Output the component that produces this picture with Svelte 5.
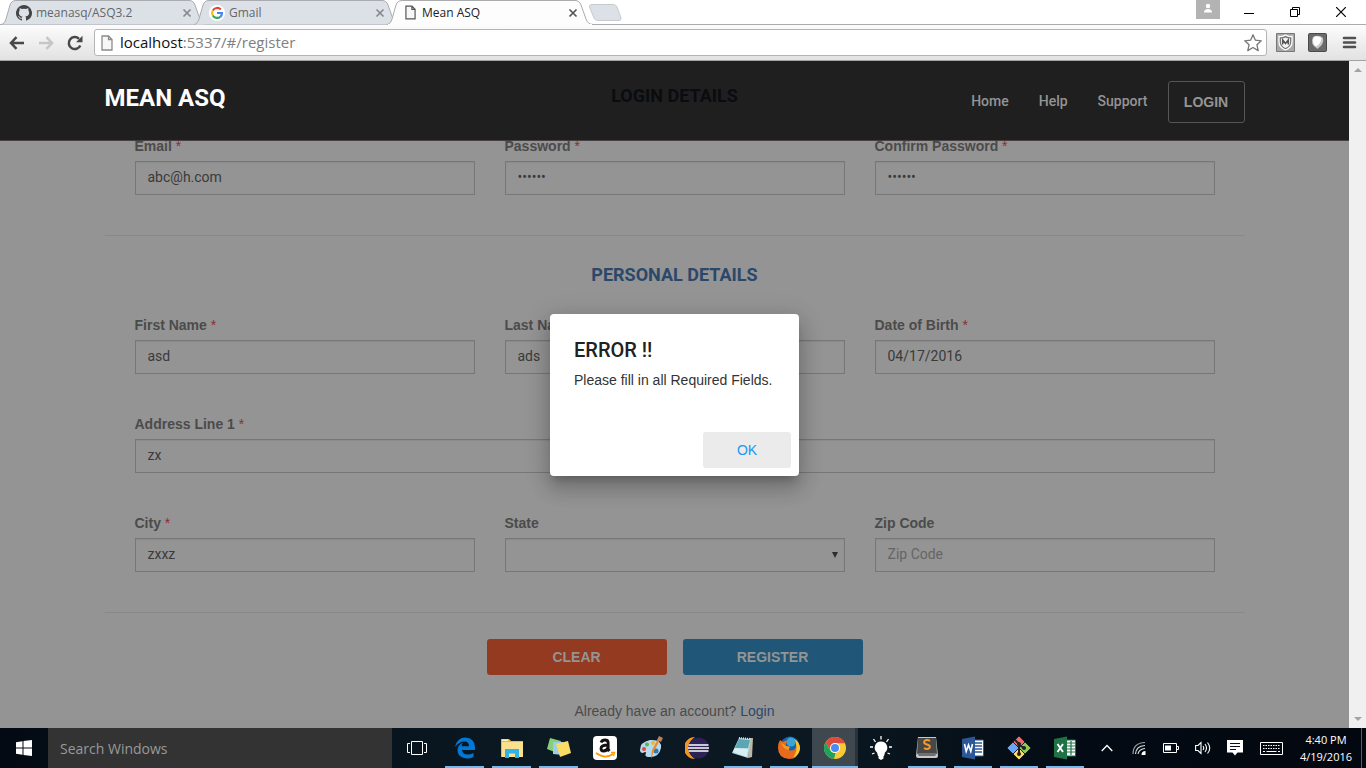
<script>
  let email = $state('abc@h.com');
  let password = $state('secret');
  let confirm = $state('secret');
  let first = $state('asd');
  let last = $state('ads');
  let birth = $state('04/17/2016');
  let address = $state('zx');
  let city = $state('zxxz');
  let zip = $state('');
  let search = $state('');
  let url = 'localhost';
</script>

{#snippet tabShape(active)}
  <svg class="shape" viewBox="0 0 204 25" width="204" height="25" aria-hidden="true">
    <path d="M-4 24.500C-1 24 0 22 1 19L5 5Q6.500 .5 11 .5H184Q188.500 .5 190 5L195 19Q197 24.500 202 24.500" fill={active ? '#fdfdfd' : '#dce1e8'} stroke="#a9abae" />
    {#if active}<path d="M-3 24.500H201" stroke="#fcfcfc" />{/if}
  </svg>
{/snippet}

{#snippet closeIcon(color)}
  <svg viewBox="0 0 10 10" width="10" height="10" aria-hidden="true"><path d="M1.500 1.500L8.500 8.500M8.500 1.500L1.500 8.500" stroke={color} stroke-width="1.700" /></svg>
{/snippet}

{#snippet pageIcon(w, h, c)}
  <svg viewBox="0 0 12 16" width={w} height={h} aria-hidden="true"><path d="M1 1H7.500L11 4.500V15H1Z M7.500 1V4.500H11" fill="#f7f7f7" stroke={c} stroke-width="1.300" /></svg>
{/snippet}

<div class="window">
  <div class="tabs">
    <div class="tab">
      {@render tabShape(false)}
      <svg viewBox="0 0 16 16" width="16" height="16" aria-hidden="true"><path fill="#444" d="M8 0a8 8 0 0 0-2.500 15.600c.4.100.5-.2.500-.4v-1.500c-2.200.5-2.700-.9-2.700-.9-.4-.9-.9-1.200-.9-1.200-.7-.5.1-.5.1-.5.800.1 1.200.8 1.200.8.7 1.200 1.900.9 2.300.7.100-.5.300-.9.500-1.100-1.800-.2-3.600-.9-3.600-4 0-.9.300-1.600.8-2.100-.1-.2-.4-1 .1-2.100 0 0 .7-.2 2.200.8a7.500 7.500 0 0 1 4 0c1.500-1 2.200-.8 2.200-.8.4 1.100.2 1.900.1 2.100.5.5.8 1.200.8 2.100 0 3.100-1.900 3.700-3.700 3.900.3.300.6.8.6 1.500v2.300c0 .2.100.5.500.4A8 8 0 0 0 8 0Z" /></svg>
      <span class="tab-title">meanasq/ASQ3.2</span>
      <button aria-label="Close meanasq/ASQ3.2">{@render closeIcon('#888')}</button>
    </div>
    <div class="tab">
      {@render tabShape(false)}
      <svg viewBox="0 0 16 16" width="16" height="16" aria-hidden="true"><circle cx="8" cy="8" r="8" fill="#fff" /><g fill="none" stroke-width="2.200"><path d="M11.800 4.500A5 5 0 0 0 3.800 5.500" stroke="#ea4335" /><path d="M3.800 5.500A5 5 0 0 0 3.800 10.500" stroke="#fbbc05" /><path d="M3.800 10.500A5 5 0 0 0 11.300 11.800" stroke="#34a853" /><path d="M11.300 11.800A5 5 0 0 0 13 8H8" stroke="#4285f4" /></g></svg>
      <span class="tab-title">Gmail</span>
      <button aria-label="Close Gmail">{@render closeIcon('#888')}</button>
    </div>
    <div class="tab active">
      {@render tabShape(true)}
      <span class="tab-page">{@render pageIcon(11, 15, '#555')}</span>
      <span class="tab-title">Mean ASQ</span>
      <button aria-label="Close Mean ASQ">{@render closeIcon('#555')}</button>
    </div>
    <button class="new-tab" aria-label="New tab"><svg viewBox="0 0 34 17" width="34" height="17" aria-hidden="true"><path d="M4 .5H25Q28 .5 29 3L33 14Q33.500 16.500 31 16.500H10Q7 16.500 6 14L1.500 3Q1 .5 4 .5Z" fill="#dce1e8" stroke="#c8cacd" /></svg></button>
    <div class="controls">
      <button class="profile" aria-label="Profile"><svg viewBox="0 0 24 19" width="24" height="19" aria-hidden="true"><path d="M0 0H24V19H0Z" fill="#b3b3b3" /><circle cx="12" cy="6" r="2.200" fill="#fff" /><path d="M8 12.500Q8 9 12 9T16 12.500Z" fill="#fff" /></svg></button>
      <button aria-label="Minimize"><svg viewBox="0 0 10 11" width="10" height="11" aria-hidden="true"><path d="M0 6.500H10" stroke="#000" /></svg></button>
      <button aria-label="Restore"><svg viewBox="0 0 10 10" width="10" height="10" aria-hidden="true"><path d="M.5 2.500H7.500V9.500H.5ZM2.500 2.500V.5H9.500V7.500H7.500" fill="none" stroke="#000" /></svg></button>
      <button aria-label="Close window"><svg viewBox="0 0 10 10" width="10" height="10" aria-hidden="true"><path d="M0 0L10 10M10 0L0 10" stroke="#000" stroke-width="1.200" /></svg></button>
    </div>
  </div>

  <div class="toolbar">
    <button aria-label="Back"><svg viewBox="0 0 16 14" width="16" height="14" aria-hidden="true"><path d="M7.500 1.200L2 7L7.500 12.800M2 7H15" fill="none" stroke="#484848" stroke-width="2.500" /></svg></button>
    <button aria-label="Forward"><svg viewBox="0 0 16 14" width="16" height="14" aria-hidden="true"><path d="M8.500 1.200L14 7L8.500 12.800M14 7H1" fill="none" stroke="#c6c6c6" stroke-width="2.500" /></svg></button>
    <button aria-label="Reload"><svg viewBox="0 0 16 16" width="16" height="16" aria-hidden="true"><path d="M13.300 10.500A6 6 0 1 1 12 3.800" fill="none" stroke="#484848" stroke-width="2.500" /><path d="M15.500 .8V7.300H9Z" fill="#484848" /></svg></button>
    <div class="address">
      {@render pageIcon(12, 16, '#8b8b8b')}
      <span class="url"><span>{url}</span>:5337/#/register</span>
      <button aria-label="Bookmark this page"><svg viewBox="0 0 20 20" width="20" height="20" aria-hidden="true"><path d="M10 1.800L12.400 7.200L18.300 7.800L13.900 11.700L15.200 17.600L10 14.500L4.800 17.600L6.100 11.700L1.700 7.800L7.600 7.200Z" fill="#fff" stroke="#777" stroke-width="1.300" stroke-linejoin="round" /></svg></button>
    </div>
    <div class="extensions">
      <button aria-label="McAfee WebAdvisor"><svg viewBox="0 0 19 19" width="19" height="19" aria-hidden="true"><path d="M.5 .5H18.500V18.500H.5Z" fill="#a8a8a8" stroke="#777" /><path d="M3 3.500Q7 4 9.500 2Q12 4 16 3.500V9Q16 14.500 9.500 17Q3 14.500 3 9Z" fill="#777" stroke="#fff" stroke-width="1.300" /><path d="M5 5.500Q8 5.500 9.500 4.500Q11 5.500 14 5.500V9Q14 13 9.500 15Q5 13 5 9Z" fill="#f5f5f5" /><path d="M6.700 11.500V7L9.500 10.500L12.300 7V11.500" fill="none" stroke="#555" stroke-width="1.500" /></svg></button>
      <button aria-label="Extension"><svg viewBox="0 0 19 19" width="19" height="19" aria-hidden="true"><rect width="19" height="19" rx="2" fill="#4a4a4a" /><rect x="1" y="1" width="17" height="17" rx="1" fill="#6b6b6b" /><path d="M5 4Q11 1 15 5Q16.500 11 9.500 16Q1.500 11 5 4Z" fill="#c9c9c9" /><path d="M6 4Q3 10 8 13.500Q13 11 13.500 5Q9 2 6 4Z" fill="#fff" /></svg></button>
      <button aria-label="Menu"><svg viewBox="0 0 19 13" width="19" height="13" aria-hidden="true"><path d="M4 2H15M4 6.500H15M4 11H15" stroke="#505050" stroke-width="2.600" stroke-linecap="round" /></svg></button>
    </div>
  </div>

  <div class="viewport">
    <div class="page">
      <header>
        <nav>
          <a class="brand" href="#/">MEAN ASQ</a>
          <a href="#/home">Home</a>
          <a href="#/help">Help</a>
          <a href="#/support">Support</a>
          <button class="login">LOGIN</button>
        </nav>
      </header>

      <form onsubmit={(e) => e.preventDefault()}>
        <h2 class="under">LOGIN DETAILS</h2>
        <div class="row">
          <div class="field"><label for="email">Email <i>*</i></label><input id="email" bind:value={email} /></div>
          <div class="field"><label for="pw">Password <i>*</i></label><input id="pw" type="password" bind:value={password} /></div>
          <div class="field"><label for="pw2">Confirm Password <i>*</i></label><input id="pw2" type="password" bind:value={confirm} /></div>
        </div>
        <hr />
        <h2>PERSONAL DETAILS</h2>
        <div class="row">
          <div class="field"><label for="first">First Name <i>*</i></label><input id="first" bind:value={first} /></div>
          <div class="field"><label for="last">Last Name <i>*</i></label><input id="last" bind:value={last} /></div>
          <div class="field"><label for="dob">Date of Birth <i>*</i></label><input id="dob" bind:value={birth} /></div>
        </div>
        <div class="row">
          <div class="field"><label for="addr">Address Line 1 <i>*</i></label><input id="addr" bind:value={address} /></div>
        </div>
        <div class="row">
          <div class="field"><label for="city">City <i>*</i></label><input id="city" bind:value={city} /></div>
          <div class="field"><label for="state">State</label>
            <div class="select"><select id="state"><option></option></select><svg viewBox="0 0 6 6" width="6" height="6" aria-hidden="true"><path d="M0 0H6L3 6Z" fill="#2e2e2e" /></svg></div>
          </div>
          <div class="field"><label for="zip">Zip Code</label><input id="zip" placeholder="Zip Code" bind:value={zip} /></div>
        </div>
        <hr />
        <div class="actions">
          <button type="button" class="clear">CLEAR</button>
          <button type="submit">REGISTER</button>
        </div>
        <p class="account">Already have an account? <a href="#/login">Login</a></p>
      </form>

      <div class="backdrop">
        <div class="dialog" role="alertdialog" aria-labelledby="dlg-title" aria-describedby="dlg-text">
          <div class="message">
            <h1 id="dlg-title">ERROR !!</h1>
            <p id="dlg-text">Please fill in all Required Fields.</p>
          </div>
          <button>OK</button>
        </div>
      </div>
    </div>
    <div class="scrollbar" aria-hidden="true">
      <svg viewBox="0 0 8 4" width="8" height="4"><path d="M0 4L4 0L8 4Z" fill="#a3a3a3" /></svg>
      <svg viewBox="0 0 8 4" width="8" height="4"><path d="M0 0L4 4L8 0Z" fill="#a3a3a3" /></svg>
    </div>
  </div>

  <div class="taskbar">
    <button class="start" aria-label="Start"><svg viewBox="0 0 16 16" width="16" height="16" aria-hidden="true"><path d="M0 2.200L6.500 1.300V7.500H0ZM7.500 1.100L16 0V7.500H7.500ZM0 8.500H6.500V14.700L0 13.800ZM7.500 8.500H16V16L7.500 14.900Z" fill="#fff" /></svg></button>
    <input class="search" aria-label="Search Windows" placeholder="Search Windows" bind:value={search} />
    <button class="view" aria-label="Task View"><svg viewBox="0 0 20 14" width="20" height="14" aria-hidden="true"><path d="M4.500 .5H15.500V13.500H4.500ZM3 2.500H.5V11.500H3M17 2.500H19.500V11.500H17" fill="none" stroke="#fff" /></svg></button>

    <button class="app wide open" aria-label="Edge"><svg viewBox="0 0 24 24" width="24" height="24" aria-hidden="true"><path d="M2 11Q4 1.500 12.500 1.500Q21.500 2 22 11V14H9Q9.500 18.500 14.500 18.500Q18 18.500 20.500 17V21Q17.500 22.500 14 22.500Q5 22 4.500 14.500Q4.500 9 10 6.500Q8.500 8 8.500 10.200H16Q16 5.500 11.500 5.500Q6 5.500 2 11Z" fill="#0078d7" /></svg></button>
    <button class="app wide open" aria-label="File Explorer"><svg viewBox="0 0 24 24" width="24" height="24" aria-hidden="true"><path d="M1 3H9L11 5H23V21H1Z" fill="#e9b948" /><path d="M2 6H23V21H2Z" fill="#fbe08d" /><path d="M2 3.500H8V5H2Z" fill="#fff3c5" /><path d="M5 13H19V22H15V17.500H9V22H5Z" fill="#2fb4e9" /></svg></button>
    <button class="app wide open" aria-label="Sticky Notes"><svg viewBox="0 0 24 24" width="24" height="24" aria-hidden="true"><path d="M3 2L14 5L10 17L0 13Z" fill="#86cf76" /><path d="M6 6L16 6V19L6 18Z" fill="#9ccdf1" /><path d="M9 8L21 5L24 17L13 21Z" fill="#f9dc63" /></svg></button>
    <button class="app" aria-label="Amazon"><svg viewBox="0 0 24 24" width="24" height="24" aria-hidden="true"><rect width="24" height="24" rx="4" fill="#fff" /><path d="M8 6.500Q9 4 12 4Q15.200 4 15.200 7V13.500L16.500 15M15 9Q8 9 8 12.500Q8 15 10.500 15Q14 15 15 11.500" fill="none" stroke="#111" stroke-width="2.800" /><path d="M3 17Q12 23.500 20 18" fill="none" stroke="#f90" stroke-width="1.700" /><path d="M18 16.500H21.500L20.500 20" fill="none" stroke="#f90" stroke-width="1.300" /></svg></button>
    <button class="app" aria-label="Paint"><svg viewBox="0 0 24 24" width="24" height="24" aria-hidden="true"><path d="M1 14Q1 6 11 4Q23 3 22 12Q20 22 9 21Q5 20 7 17Q7 15 4 17Q1 17 1 14Z" fill="#b5d9ef" /><circle cx="5" cy="13" r="2" fill="#dd4c38" /><circle cx="8" cy="8.500" r="2" fill="#66ae45" /><circle cx="14" cy="7" r="2" fill="#f0b832" /><circle cx="17" cy="15" r="2.500" fill="#2c78b8" /><path d="M21 4L15 15L12 23L13 14L19 3Z" fill="#e88b2b" /><path d="M18 4L20 0L24 2L22 6Z" fill="#bb8055" /></svg></button>
    <button class="app" aria-label="Eclipse"><svg viewBox="0 0 24 24" width="24" height="24" aria-hidden="true"><path d="M10 1A11 11 0 0 0 10 23Q3 18 4 12Q4 5 10 1Z" fill="#f7941e" /><circle cx="13.500" cy="12" r="10.500" fill="#2c2255" /><path d="M3.500 9H23.500M3 12H24M3.500 15H23.500" stroke="#fff" stroke-width="1.500" /></svg></button>
    <button class="app open" aria-label="Notepad"><svg viewBox="0 0 24 24" width="24" height="24" aria-hidden="true"><path d="M19 2H22L21 21L17 22Z" fill="#c2b79c" /><path d="M8 2L20 3L17 22L1 17Z" fill="#a8d6de" /><path d="M8 3L19 4L17 12L4 12Z" fill="#5ca6b3" /><path d="M4 12L17 13L16 21L2 16Z" fill="#d8eef1" /><path d="M8 2L20 3" stroke="#ddd" stroke-width="2" stroke-dasharray="1 1" /></svg></button>
    <button class="app open" aria-label="Firefox"><svg viewBox="0 0 24 24" width="24" height="24" aria-hidden="true"><circle cx="13" cy="10" r="9.500" fill="#1765a9" /><circle cx="14" cy="6" r="4.500" fill="#37a5d8" /><path d="M3 4L6 6Q9 4 11 5Q8 8 9 10L13 11Q11 13 12 14Q17 16 19 11Q20 6 17 3Q23 6 23 13Q21 23 12 23Q1 22 1 12Q1 7 3 4Z" fill="#e86a1c" /><path d="M17 3Q23 6 23 13Q22 19 16 22Q21 14 19 8Q19 5 17 3Z" fill="#fdc52b" /><path d="M4 7Q8 9 9 10L13 11Q11 13 12 14Q7 14 4 7Z" fill="#f69b22" /></svg></button>
    <button class="app open current" aria-label="Chrome"><svg viewBox="0 0 24 24" width="24" height="24" aria-hidden="true"><circle cx="12" cy="12" r="11" fill="#fbc932" /><path d="M2.500 6.500A11 11 0 0 1 22 7.200H12A5 5 0 0 0 7.500 14Z" fill="#dd4b3e" /><path d="M2.500 6.500L7.500 14.500Q9 17.500 12.500 17L11 23A11 11 0 0 1 2.500 6.500Z" fill="#1ca261" /><circle cx="12" cy="12" r="5" fill="#fff" /><circle cx="12" cy="12" r="4" fill="#4a8af4" /></svg></button>
    <button class="app" aria-label="Tips"><svg viewBox="0 0 24 24" width="24" height="24" aria-hidden="true"><path d="M12 5.500A6.200 6.200 0 0 1 16 16.500L15 20H9L8 16.500A6.200 6.200 0 0 1 12 5.500ZM9.500 20H14.500V22.500L12 24L9.500 22.500Z" fill="#fff" /><path d="M12 0V3.500M4.500 3L6.500 6M19.500 3L17.500 6M1 11H4M20 11H23M3 18L5.500 17M21 18L18.500 17" stroke="#fff" stroke-width="1.300" /></svg></button>
    <button class="app open" aria-label="Sublime Text"><svg viewBox="0 0 24 24" width="24" height="24" aria-hidden="true"><path d="M3 1H21L23 20Q23 22 21 22H3Q1 22 1 20Z" fill="#c8c8c8" /><path d="M3 2H21L22 18H2Z" fill="#484848" /><path d="M2 17H22L20 20H4Z" fill="#707070" /><path d="M15 5Q12 3 9.500 5Q8 7.500 12 8.500Q16 9.500 14.500 12Q12 14 9 12" fill="none" stroke="#f59b2e" stroke-width="2" /></svg></button>
    <button class="app open" aria-label="Word"><svg viewBox="0 0 24 24" width="24" height="24" aria-hidden="true"><path d="M11 4H22.500V20H11Z" fill="#fff" stroke="#2b5797" /><path d="M14 7H21M14 10H21M14 13H21M14 16H21" stroke="#2b5797" stroke-width="1.300" /><path d="M1 3L14 .5V23.500L1 21Z" fill="#2b5797" /><path d="M3.500 8L5.200 15.500L7.500 9L9.800 15.500L11.500 8" fill="none" stroke="#fff" stroke-width="1.600" /></svg></button>
    <button class="app open" aria-label="Git"><svg viewBox="0 0 24 24" width="24" height="24" aria-hidden="true"><g stroke="#222"><path d="M12 0L18 6L12 12L6 6Z" fill="#f06c6c" /><path d="M18 6L24 12L18 18L12 12Z" fill="#8bcb5a" /><path d="M6 6L12 12L6 18L0 12Z" fill="#6aa8f5" /><path d="M12 12L18 18L12 24L6 18Z" fill="#f9d965" /></g><path d="M8 4L12 8V19M12 9L17 12" fill="none" stroke="#222" stroke-width="2" /><circle cx="12" cy="8" r="2" fill="#222" /><circle cx="17" cy="12" r="2" fill="#222" /><circle cx="12" cy="18" r="2" fill="#222" /></svg></button>
    <button class="app open" aria-label="Excel"><svg viewBox="0 0 24 24" width="24" height="24" aria-hidden="true"><path d="M11 4H22.500V20H11Z" fill="#fff" stroke="#1f7244" /><path d="M14 7H22M14 10H22M14 13H22M14 16H22M18 5V19" stroke="#1f7244" stroke-width="1.200" /><path d="M1 3L14 .5V23.500L1 21Z" fill="#1f7244" /><path d="M4.500 8L10 16M10 8L4.500 16" stroke="#fff" stroke-width="1.900" /></svg></button>

    <div class="tray">
      <button aria-label="Show hidden icons"><svg viewBox="0 0 12 8" width="12" height="8" aria-hidden="true"><path d="M.7 7L6 1.500L11.300 7" fill="none" stroke="#fff" stroke-width="1.300" /></svg></button>
      <button aria-label="Network"><svg viewBox="0 0 14 14" width="14" height="14" aria-hidden="true"><g fill="none" stroke="#ddd" stroke-width="1.200"><path d="M1 13Q1 2 13 1.500" opacity=".7" /><path d="M3.500 13Q4 5 13 4.500" /><path d="M6 13Q7 8 13 7.500" /></g><path d="M9.500 14Q9.500 10 13.500 10V14Z" fill="#fff" /></svg></button>
      <button aria-label="Battery"><svg viewBox="0 0 16 10" width="16" height="10" aria-hidden="true"><path d="M.5 .5H13.500V9.500H.5ZM14 3.500H15.500V6.500H14" fill="none" stroke="#fff" /><path d="M2 2.500H8V7.500H2Z" fill="#fff" /></svg></button>
      <button aria-label="Volume"><svg viewBox="0 0 17 14" width="17" height="14" aria-hidden="true"><path d="M.6 4.500H3L6 1.500V12.500L3 9.500H.6ZM8 5Q9.500 7 8 9M10 3Q13 7 10 11M12.500 1.500Q17 7 12.500 12.500" fill="none" stroke="#fff" stroke-width="1.100" /></svg></button>
      <button aria-label="Notifications"><svg viewBox="0 0 16 16" width="16" height="16" aria-hidden="true"><path d="M0 0H16V12.500H10.500L8 15.500L5.500 12.500H0Z" fill="#fff" /><path d="M3 3.500H13M3 6.500H13M3 9.500H9" stroke="#06101a" stroke-width="1.200" /></svg></button>
      <button class="keys" aria-label="Touch keyboard"><svg viewBox="0 0 23 13" width="23" height="13" aria-hidden="true"><path d="M.5 .5H22.500V12.500H.5Z" fill="none" stroke="#fff" /><path d="M3 3.500H20M3 6.500H20" stroke="#fff" stroke-dasharray="1.500 1" /><path d="M3 9.500H5M6.500 9.500H16.500M18 9.500H20" stroke="#fff" /></svg></button>
      <div class="clock"><span>4:40 PM</span><span>4/19/2016</span></div>
    </div>
  </div>
</div>

<style>
  :global(body) { margin: 0; overflow: hidden; }
  * { box-sizing: border-box; }
  button { border: 0; padding: 0; background: none; font: inherit; color: inherit; display: flex; align-items: center; justify-content: center; }
  a { text-decoration: none; color: inherit; }
  h1, h2, p { margin: 0; }
  svg { display: block; flex: none; }

  .window { display: flex; flex-direction: column; height: 100vh; font-family: "Open Sans", sans-serif; background: #fff; }

  .tabs { display: flex; height: 25px; padding-left: 5px; border-bottom: 1px solid #a9abae; font-size: 12px; color: #666; }
  .tab { position: relative; width: 193px; height: 25px; flex: none; display: flex; align-items: center; gap: 4px; padding: 0 6px 0 11px; isolation: isolate; }
  .tab.active { z-index: 1; color: #222; }
  .shape { position: absolute; left: 0; top: 0; z-index: -1; overflow: visible; }
  .tab-title { flex: 1; white-space: nowrap; }
  .tab-page { width: 16px; display: flex; justify-content: center; }
  .new-tab { margin: 0 auto 0 4px; }
  .controls { display: flex; align-items: center; padding-right: 2px; }
  .controls button { width: 46px; height: 24px; }
  .controls .profile { width: 24px; align-items: flex-start; margin-right: 6px; }

  .toolbar { display: flex; align-items: center; gap: 13px; height: 36px; padding: 0 7px 0 9px; border-bottom: 1px solid #a2a2a2; background: linear-gradient(#fcfcfc, #e2e2e2); }
  .address { flex: 1; display: flex; align-items: center; gap: 7px; height: 27px; margin: 0 -4px 0 -2px; padding: 0 3px 0 6px; border: 1px solid #b4b4b4; border-radius: 3px; background: #fff; }
  .url { flex: 1; padding-bottom: 2px; font-size: 15px; line-height: 20px; color: #808080; }
  .url span { color: #111; }
  .extensions { display: flex; align-items: center; gap: 13px; }

  .viewport { flex: 1; min-height: 0; display: flex; font-family: Roboto, sans-serif; }
  .page { position: relative; flex: 1; overflow: hidden; background: #949494; font-size: 14px; line-height: 20px; color: #4b4b4b; }
  .scrollbar { width: 17px; display: flex; flex-direction: column; align-items: center; justify-content: space-between; padding: 7px 0; background: #f0f0f0; }

  header { position: absolute; inset: 0 0 auto; height: 80px; background: rgba(12, 12, 12, 0.86); border-bottom: 1px solid #474043; }
  nav { display: flex; align-items: center; gap: 30px; max-width: 1140px; height: 100%; margin: 0 auto; padding-top: 1px; font-weight: 500; color: #949494; }
  .brand { margin-right: auto; padding-bottom: 7px; font-size: 24px; line-height: 28px; font-weight: 700; color: #fff; }
  .login { width: 77px; height: 42px; margin: 2px 0 0 -10px; border: 1px solid #555; border-radius: 3px; font-family: "Liberation Sans", sans-serif; font-weight: 700; }

  form { max-width: 1140px; margin: 0 auto; padding-top: 25px; }
  h2 { margin-bottom: 30px; text-align: center; font-size: 18px; line-height: 20px; font-weight: 700; color: #2c4869; }
  .under { color: #00112a; }
  .row { display: flex; gap: 30px; padding: 0 30px 40px; }
  .field { flex: 1; display: flex; flex-direction: column; gap: 5px; }
  label { font-family: "Liberation Sans", sans-serif; font-weight: 700; line-height: 20px; color: #4b4b4b; }
  i { font-style: normal; font-weight: 400; color: #8c2d32; }
  .field input, select { width: 100%; height: 34px; padding: 0 12px 2px; border: 1px solid #777; border-radius: 0; background: #949494; box-shadow: inset 0 1px 1px #8a8a8a; font: 14px Roboto, sans-serif; color: #3a3a3a; appearance: none; }
  .field input::placeholder { color: #656565; opacity: 1; }
  .select { position: relative; }
  .select svg { position: absolute; right: 7px; top: 14px; }
  hr { height: 1px; margin: 0 0 29px; border: 0; background: #898989; }
  .actions { display: flex; justify-content: center; gap: 16px; margin-top: -3px; font-family: "Liberation Sans", sans-serif; font-weight: 700; color: #949494; text-shadow: 0 2px 2px rgba(0, 0, 0, 0.35); }
  .actions button { width: 180px; height: 36px; border-radius: 3px; background: #205778; }
  .actions .clear { background: #943a20; }
  .account { margin-top: 26px; text-align: center; font-family: "Liberation Sans", sans-serif; }
  .account a { color: #2c4869; }

  .backdrop { position: absolute; inset: 0; display: flex; align-items: center; justify-content: center; }
  .dialog { display: flex; flex-direction: column; align-items: flex-end; min-width: 249px; padding: 24px 8px 8px; border-radius: 4px; background: #fff; box-shadow: 0 7px 8px -4px rgba(0, 0, 0, 0.2), 0 13px 19px 2px rgba(0, 0, 0, 0.14), 0 5px 24px 4px rgba(0, 0, 0, 0.12); font-family: "Liberation Sans", sans-serif; color: #333; }
  .message { align-self: stretch; padding: 0 16px 42px; }
  h1 { margin-bottom: 8px; font: 500 20px/24px Roboto, sans-serif; color: #212121; }
  .dialog button { width: 88px; height: 36px; border-radius: 3px; background: #ebebeb; color: #2196f3; }

  .taskbar { display: flex; height: 40px; background: linear-gradient(90deg, #030a13, #0b1922 40%, #0b1821 60%, #030a13 80%, #030810); color: #fff; }
  .start { width: 48px; }
  .search { flex: 0 0 344px; border: 0; border-radius: 0; padding: 0 12px; background: #333; color: #fff; font: 14px "Open Sans", sans-serif; }
  .search::placeholder { color: #999; opacity: 1; }
  .view { width: 49px; }
  .app { position: relative; width: 46px; }
  .app.wide { width: 47px; }
  .open::after { content: ""; position: absolute; inset: auto 4px 0; height: 2px; background: #76b9ed; }
  .current { background: #3f484e; box-shadow: inset -3px 0 #29323a; }
  .current::after { inset: auto 0 0; }
  .tray { flex: 1; display: flex; justify-content: flex-end; margin-right: 4px; border-right: 1px solid #555c63; }
  .tray button { width: 32px; }
  .tray .keys { width: 40px; }
  .clock { width: 70px; display: flex; flex-direction: column; align-items: center; justify-content: center; font-size: 11px; line-height: 17px; }
</style>
